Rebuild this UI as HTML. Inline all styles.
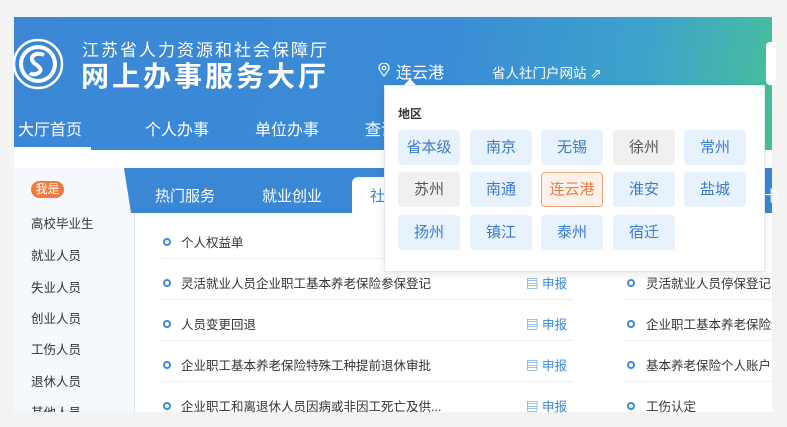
<!DOCTYPE html>
<html><head><meta charset="utf-8"><style>
*{margin:0;padding:0;box-sizing:border-box}
body{width:787px;height:427px;background:#f3f3f3;position:relative;overflow:hidden;font-family:"Liberation Sans","Noto Sans CJK SC",sans-serif}
.a{position:absolute}
.hdr{left:14px;top:17px;width:758px;height:133px;background:linear-gradient(100deg,#3b87d6 0%,#3a8bd6 55%,#3ea3cb 82%,#49c09a 100%)}
.t{white-space:nowrap}
.bt{position:absolute;width:62px;height:35px;border-radius:4px;background:#e8f2fc;color:#3a7bc8;font-size:15px;text-align:center;line-height:35px}
.row{position:absolute;font-size:12.5px;color:#333;white-space:nowrap}
.dot{position:absolute;width:8px;height:8px;border:2px solid #3a8ad6;border-radius:50%}
.sep{position:absolute;height:1px;background:#eceff3}
.sb{font-size:12.5px;color:#3a88d2;position:absolute;white-space:nowrap}
.side{position:absolute;left:31px;font-size:12.5px;color:#333}
</style></head><body>
<div class="a hdr"></div>
<svg class="a" style="left:13px;top:36px" width="52" height="56" viewBox="0 0 52 56"><circle cx="25" cy="28" r="24" fill="#3a87d5" stroke="#fff" stroke-width="2.5"/><circle cx="25" cy="28" r="19" fill="#fff"/><circle cx="25" cy="28" r="15" fill="#3a87d5"/><path d="M31 19 C23 15 15 21 21 27 C27 31 31 35 23 38 C19 39 17 37 17 37" fill="none" stroke="#fff" stroke-width="4"/></svg>
<div class="a t" style="left:82px;top:36px;font-size:17px;color:#fff;letter-spacing:2px">江苏省人力资源和社会保障厅</div>
<div class="a t" style="left:81px;top:55px;font-size:28px;font-weight:bold;color:#fff;letter-spacing:3px">网上办事服务大厅</div>
<svg class="a" style="left:378px;top:63px" width="12" height="14" viewBox="0 0 12 14"><path d="M6 13 C2 8 1 6 1 5 A5 5 0 0 1 11 5 C11 6 10 8 6 13Z" fill="none" stroke="#fff" stroke-width="1.2"/><circle cx="6" cy="5" r="1.8" fill="none" stroke="#fff" stroke-width="1.2"/></svg>
<div class="a t" style="left:396px;top:59px;font-size:16px;color:#fff">连云港</div>
<div class="a t" style="left:492px;top:62px;font-size:13.5px;color:#fff">省人社门户网站 ⇗</div>
<div class="a" style="left:766px;top:42px;width:10px;height:43px;background:#fff;border-radius:4px 0 0 4px"></div>
<div class="a t" style="left:18px;top:116px;font-size:16px;color:#fff">大厅首页</div>
<div class="a" style="left:14px;top:147px;width:77px;height:3px;background:#fff"></div>
<div class="a t" style="left:145px;top:116px;font-size:16px;color:#fff">个人办事</div>
<div class="a t" style="left:255px;top:116px;font-size:16px;color:#fff">单位办事</div>
<div class="a t" style="left:365px;top:116px;font-size:16px;color:#fff">查询</div>
<div class="a" style="left:14px;top:150px;width:758px;height:262px;background:#fff"></div>
<div class="a" style="left:14px;top:168px;width:121px;height:244px;background:#f5f8fc;border-right:1px solid #dde7f2"></div>
<div class="a" style="left:31px;top:181px;width:33px;height:17px;background:#f07a3c;border-radius:9px;color:#fff;font-size:12px;text-align:center;line-height:17px">我是</div>
<div class="side" style="top:213px">高校毕业生</div>
<div class="side" style="top:245px">就业人员</div>
<div class="side" style="top:277px">失业人员</div>
<div class="side" style="top:308px">创业人员</div>
<div class="side" style="top:339px">工伤人员</div>
<div class="side" style="top:371px">退休人员</div>
<div class="side" style="top:402px;height:10px;overflow:hidden">其他人员</div>
<div class="a" style="left:124px;top:168px;width:648px;height:45px;background:#3a87d5;clip-path:polygon(0 0,100% 0,100% 100%,7px 100%)"></div>
<div class="a t" style="left:155px;top:185px;font-size:15px;color:#fff">热门服务</div>
<div class="a t" style="left:262px;top:185px;font-size:15px;color:#fff">就业创业</div>
<div class="a" style="left:352px;top:177px;width:60px;height:36px;background:#fff;border-radius:6px 6px 0 0"></div>
<div class="a t" style="left:370px;top:185px;font-size:15px;color:#3a87d5">社</div>
<div class="a t" style="left:764px;top:185px;font-size:15px;color:#fff">卡</div>
<div class="dot" style="left:163px;top:238px"></div><div class="row" style="left:181px;top:232px">个人权益单</div>
<div class="sep" style="left:162px;top:258px;width:411px"></div>
<div class="dot" style="left:163px;top:279px"></div><div class="row" style="left:181px;top:273px">灵活就业人员企业职工基本养老保险参保登记</div>
<div class="sep" style="left:162px;top:299px;width:411px"></div>
<div class="dot" style="left:163px;top:320px"></div><div class="row" style="left:181px;top:314px">人员变更回退</div>
<div class="sep" style="left:162px;top:340px;width:411px"></div>
<div class="dot" style="left:163px;top:361px"></div><div class="row" style="left:181px;top:355px">企业职工基本养老保险特殊工种提前退休审批</div>
<div class="sep" style="left:162px;top:381px;width:411px"></div>
<div class="dot" style="left:163px;top:402px"></div><div class="row" style="left:181px;top:396px">企业职工和离退休人员因病或非因工死亡及供...</div>
<div class="sb" style="left:526px;top:273px">▤ 申报</div>
<div class="sb" style="left:526px;top:314px">▤ 申报</div>
<div class="sb" style="left:526px;top:355px">▤ 申报</div>
<div class="sb" style="left:526px;top:396px">▤ 申报</div>
<div class="dot" style="left:627px;top:279px"></div><div class="row" style="left:646px;top:273px">灵活就业人员停保登记</div>
<div class="sep" style="left:625px;top:299px;width:147px"></div>
<div class="dot" style="left:627px;top:320px"></div><div class="row" style="left:646px;top:314px;width:126px;overflow:hidden">企业职工基本养老保险登记</div>
<div class="sep" style="left:625px;top:340px;width:147px"></div>
<div class="dot" style="left:627px;top:361px"></div><div class="row" style="left:646px;top:355px">基本养老保险个人账户</div>
<div class="sep" style="left:625px;top:381px;width:147px"></div>
<div class="dot" style="left:627px;top:402px"></div><div class="row" style="left:646px;top:396px">工伤认定</div>
<div class="a" style="left:384px;top:85px;width:381px;height:187px;background:#fff;border:1px solid #e4e8ee;box-shadow:0 2px 8px rgba(0,0,0,.1)"></div>
<div class="a" style="left:404px;top:79px;width:0;height:0;border-left:6px solid transparent;border-right:6px solid transparent;border-bottom:6px solid #fff"></div>
<div class="a t" style="left:398px;top:105px;font-size:12px;font-weight:bold;color:#333">地区</div>
<div class="bt" style="left:398px;top:130px">省本级</div>
<div class="bt" style="left:470px;top:130px">南京</div>
<div class="bt" style="left:541px;top:130px">无锡</div>
<div class="bt" style="left:613px;top:130px;background:#f0f0f0;color:#555">徐州</div>
<div class="bt" style="left:684px;top:130px">常州</div>
<div class="bt" style="left:398px;top:172px;background:#f0f0f0;color:#555">苏州</div>
<div class="bt" style="left:470px;top:172px">南通</div>
<div class="bt" style="left:541px;top:172px;background:#fdf1ea;border:1px solid #f0a47e;color:#ee7a45;line-height:33px">连云港</div>
<div class="bt" style="left:613px;top:172px">淮安</div>
<div class="bt" style="left:684px;top:172px">盐城</div>
<div class="bt" style="left:398px;top:215px">扬州</div>
<div class="bt" style="left:470px;top:215px">镇江</div>
<div class="bt" style="left:541px;top:215px">泰州</div>
<div class="bt" style="left:613px;top:215px">宿迁</div>
</body></html>
